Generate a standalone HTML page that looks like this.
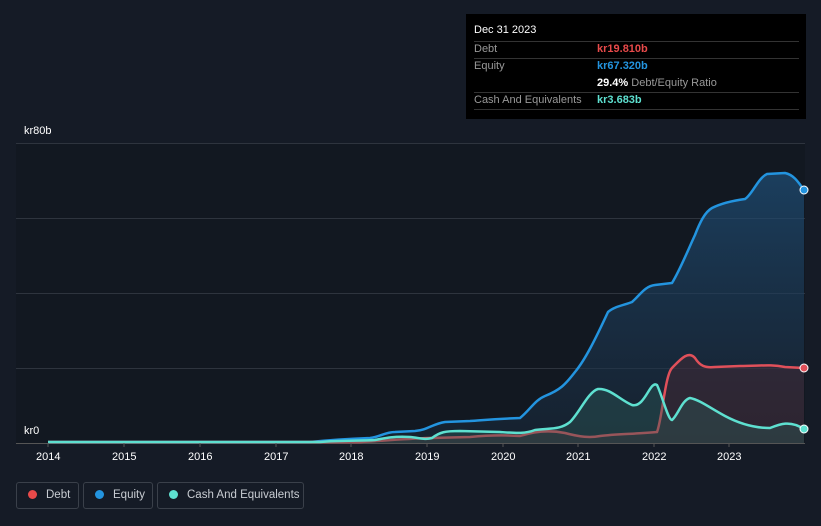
<!DOCTYPE html><html><head><style>
html,body{margin:0;width:821px;height:526px;overflow:hidden}
body{background:#151b26;font-family:"Liberation Sans",sans-serif;position:relative;color:#fff}
.t{position:absolute;font-size:11px;white-space:nowrap}
.tip{position:absolute;left:466px;top:14px;width:340px;height:105px;background:#000}
.tip .r{position:absolute;left:8px;width:325px;border-top:1px solid #333;height:17px}
.lg{position:absolute;top:482px;height:27px;border:1px solid #3a404a;border-radius:3px;font-size:11.5px;color:#c8ccd2;line-height:25px;box-sizing:border-box;white-space:nowrap;overflow:hidden}
.lg i{display:inline-block;width:9px;height:9px;border-radius:50%;margin:0 9px 0 11px;vertical-align:-1px}
</style></head><body>
<svg width="821" height="526" style="position:absolute;left:0;top:0">
<defs><linearGradient id="g" x1="0" y1="0" x2="0" y2="1"><stop offset="0" stop-color="#1f4f78" stop-opacity=".7"/><stop offset="1" stop-color="#1a2a3c" stop-opacity=".5"/></linearGradient></defs>
<rect x="16" y="143" width="789" height="300" fill="#121821"/>
<g stroke="#2e343e" stroke-width="1"><line x1="16" y1="143.5" x2="805" y2="143.5"/><line x1="16" y1="218.5" x2="805" y2="218.5"/><line x1="16" y1="293.5" x2="805" y2="293.5"/><line x1="16" y1="368.5" x2="805" y2="368.5"/><line x1="16" y1="443.5" x2="805" y2="443.5" stroke="#555"/></g>
<path d="M48 442 L310 442 C330 440 345 439 370 438 C380 437 385 432 395 432 L415 431 C428 430 432 424 445 422 L470 421 C485 420 495 419 520 418 C530 410 535 400 545 396 C560 390 565 385 575 372 C585 360 595 340 608 312 C615 306 625 305 632 302 C640 295 645 286 655 285 L672 283 C680 270 688 250 695 235 C700 222 705 212 712 208 C720 204 730 201 745 199 C752 195 758 178 767 174 L785 173 C795 175 800 185 804 190 L804 443 L48 443 Z" fill="url(#g)"/>
<path d="M48 442 L310 442 C330 440 345 439 370 438 C380 437 385 432 395 432 L415 431 C428 430 432 424 445 422 L470 421 C485 420 495 419 520 418 C530 410 535 400 545 396 C560 390 565 385 575 372 C585 360 595 340 608 312 C615 306 625 305 632 302 C640 295 645 286 655 285 L672 283 C680 270 688 250 695 235 C700 222 705 212 712 208 C720 204 730 201 745 199 C752 195 758 178 767 174 L785 173 C795 175 800 185 804 190" fill="none" stroke="#2394df" stroke-width="2.5"/>
<path d="M48 442 L360 442 C380 441 400 439 430 438 L470 437 C490 435 505 435 520 436 C535 431 550 430 565 433 C580 437 590 438 600 436 C615 434 635 434 657 432 C662 420 665 375 672 368 C680 360 688 350 695 358 C700 366 705 368 715 367 L740 366 C760 366 770 364 785 367 L804 368 L804 443 L48 443 Z" fill="#5a2a35" fill-opacity=".35"/>
<path d="M48 442 L360 442 C380 441 400 439 430 438 L470 437 C490 435 505 435 520 436 C535 431 550 430 565 433 C580 437 590 438 600 436 C615 434 635 434 657 432 C662 420 665 375 672 368 C680 360 688 350 695 358 C700 366 705 368 715 367 L740 366 C760 366 770 364 785 367 L804 368" fill="none" stroke="#e0505a" stroke-width="2.5"/>
<path d="M48 442 L320 442 C340 440 360 441 375 440 C385 438 395 436 410 437 C420 438 425 440 432 438 C440 432 445 431 460 431 L500 432 C515 433 525 434 535 430 C550 428 560 430 570 422 C580 412 588 392 598 389 C610 388 620 400 632 405 C645 408 650 380 657 385 C662 395 668 420 672 420 C678 415 682 400 690 398 C700 400 710 408 725 416 C740 424 755 428 770 428 C780 424 790 420 804 429 L804 443 L48 443 Z" fill="#2d5d5a" fill-opacity=".4"/>
<path d="M48 442 L320 442 C340 440 360 441 375 440 C385 438 395 436 410 437 C420 438 425 440 432 438 C440 432 445 431 460 431 L500 432 C515 433 525 434 535 430 C550 428 560 430 570 422 C580 412 588 392 598 389 C610 388 620 400 632 405 C645 408 650 380 657 385 C662 395 668 420 672 420 C678 415 682 400 690 398 C700 400 710 408 725 416 C740 424 755 428 770 428 C780 424 790 420 804 429" fill="none" stroke="#5ee0d0" stroke-width="2.5"/>
<circle cx="804" cy="190" r="4" fill="#2394df" stroke="#fff" stroke-width="1"/>
<circle cx="804" cy="368" r="4" fill="#e0505a" stroke="#fff" stroke-width="1"/>
<circle cx="804" cy="429" r="4" fill="#5ee0d0" stroke="#fff" stroke-width="1"/>
<g stroke="#555"><line x1="48" y1="443" x2="48" y2="447"/><line x1="124" y1="443" x2="124" y2="447"/><line x1="200" y1="443" x2="200" y2="447"/><line x1="276" y1="443" x2="276" y2="447"/><line x1="351" y1="443" x2="351" y2="447"/><line x1="427" y1="443" x2="427" y2="447"/><line x1="503" y1="443" x2="503" y2="447"/><line x1="578" y1="443" x2="578" y2="447"/><line x1="654" y1="443" x2="654" y2="447"/><line x1="729" y1="443" x2="729" y2="447"/></g>
</svg>
<div class="t" style="left:24px;top:125px">kr80b</div>
<div class="t" style="left:24px;top:425px">kr0</div>
<div class="t" style="left:36px;top:451px">2014</div><div class="t" style="left:112px;top:451px">2015</div><div class="t" style="left:188px;top:451px">2016</div><div class="t" style="left:264px;top:451px">2017</div><div class="t" style="left:339px;top:451px">2018</div><div class="t" style="left:415px;top:451px">2019</div><div class="t" style="left:491px;top:451px">2020</div><div class="t" style="left:566px;top:451px">2021</div><div class="t" style="left:642px;top:451px">2022</div><div class="t" style="left:717px;top:451px">2023</div>
<div class="tip">
<div class="t" style="left:8px;top:10px">Dec 31 2023</div>
<div class="r" style="top:27px"></div><div class="r" style="top:44px"></div><div class="r" style="top:78px"></div><div class="r" style="top:95px"></div>
<div class="t" style="left:8px;top:29px;color:#999">Debt</div><div class="t" style="left:131px;top:29px;color:#e84a4a;font-weight:bold">kr19.810b</div>
<div class="t" style="left:8px;top:46px;color:#999">Equity</div><div class="t" style="left:131px;top:46px;color:#2394df;font-weight:bold">kr67.320b</div>
<div class="t" style="left:131px;top:63px"><b>29.4%</b> <span style="color:#999">Debt/Equity Ratio</span></div>
<div class="t" style="left:8px;top:80px;color:#999">Cash And Equivalents</div><div class="t" style="left:131px;top:80px;color:#5ee0d0;font-weight:bold">kr3.683b</div>
</div>
<div class="lg" style="left:16px;width:63px"><i style="background:#e84a4a"></i>Debt</div>
<div class="lg" style="left:83px;width:70px"><i style="background:#2394df"></i>Equity</div>
<div class="lg" style="left:157px;width:147px"><i style="background:#5ee0d0"></i>Cash And Equivalents</div>
</body></html>
